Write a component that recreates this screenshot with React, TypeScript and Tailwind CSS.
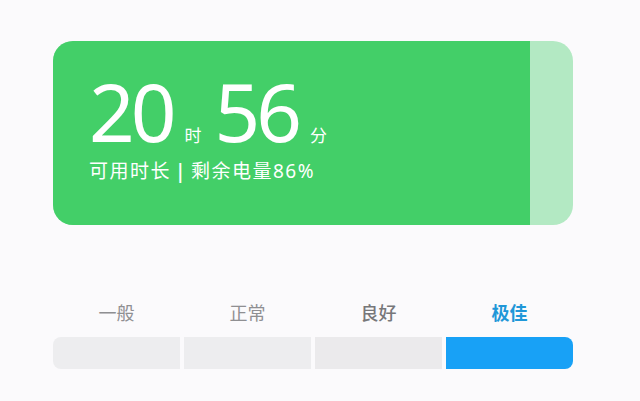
export default function App() {
  const levels = [
    { label: "一般", cls: "text-[#8f8f92] font-normal" },
    { label: "正常", cls: "text-[#8f8f92] font-normal" },
    { label: "良好", cls: "text-[#77777a] font-medium" },
    { label: "极佳", cls: "text-[#1f97d8] font-bold" },
  ];

  return (
    <div
      className="w-[640px] h-[401px] bg-[#fbfafc] overflow-hidden pt-[41px] pl-[53px]"
      style={{ fontFamily: '"Noto Sans", "Noto Sans CJK SC", sans-serif' }}
    >
      {/* battery card */}
      <div className="w-[520px] h-[184px] rounded-[20px] bg-[#b3e9c3] overflow-hidden flex">
        <div className="w-[477px] h-full bg-[#43cf68] pl-[36px] pt-[30px] text-white">
          <div className="flex items-baseline leading-none">
            <span className="text-[80px] tracking-[-4px]">20</span>
            <span className="text-[17px] ml-[12px] mr-[13px]">时</span>
            <span className="text-[80px] tracking-[-4px]">56</span>
            <span className="text-[17px] ml-[12px]">分</span>
          </div>
          <div className="mt-[11px] text-[19px] leading-none tracking-[1.5px]">
            可用时长<span className="font-semibold mx-[4px]">|</span>剩余电量86%
          </div>
        </div>
      </div>

      {/* level labels */}
      <div className="w-[520px] mt-[79px] grid grid-cols-4 gap-[4px]">
        {levels.map((l) => (
          <div key={l.label} className={`text-center text-[18px] leading-none ${l.cls}`}>
            {l.label}
          </div>
        ))}
      </div>

      {/* level bar */}
      <div className="w-[520px] mt-[15px] h-[32px] grid grid-cols-4 gap-[4px]">
        <div className="bg-[#ededef] rounded-l-[8px]" />
        <div className="bg-[#ededef]" />
        <div className="bg-[#ebeaec]" />
        <div className="bg-[#18a1f6] rounded-r-[8px]" />
      </div>
    </div>
  );
}
